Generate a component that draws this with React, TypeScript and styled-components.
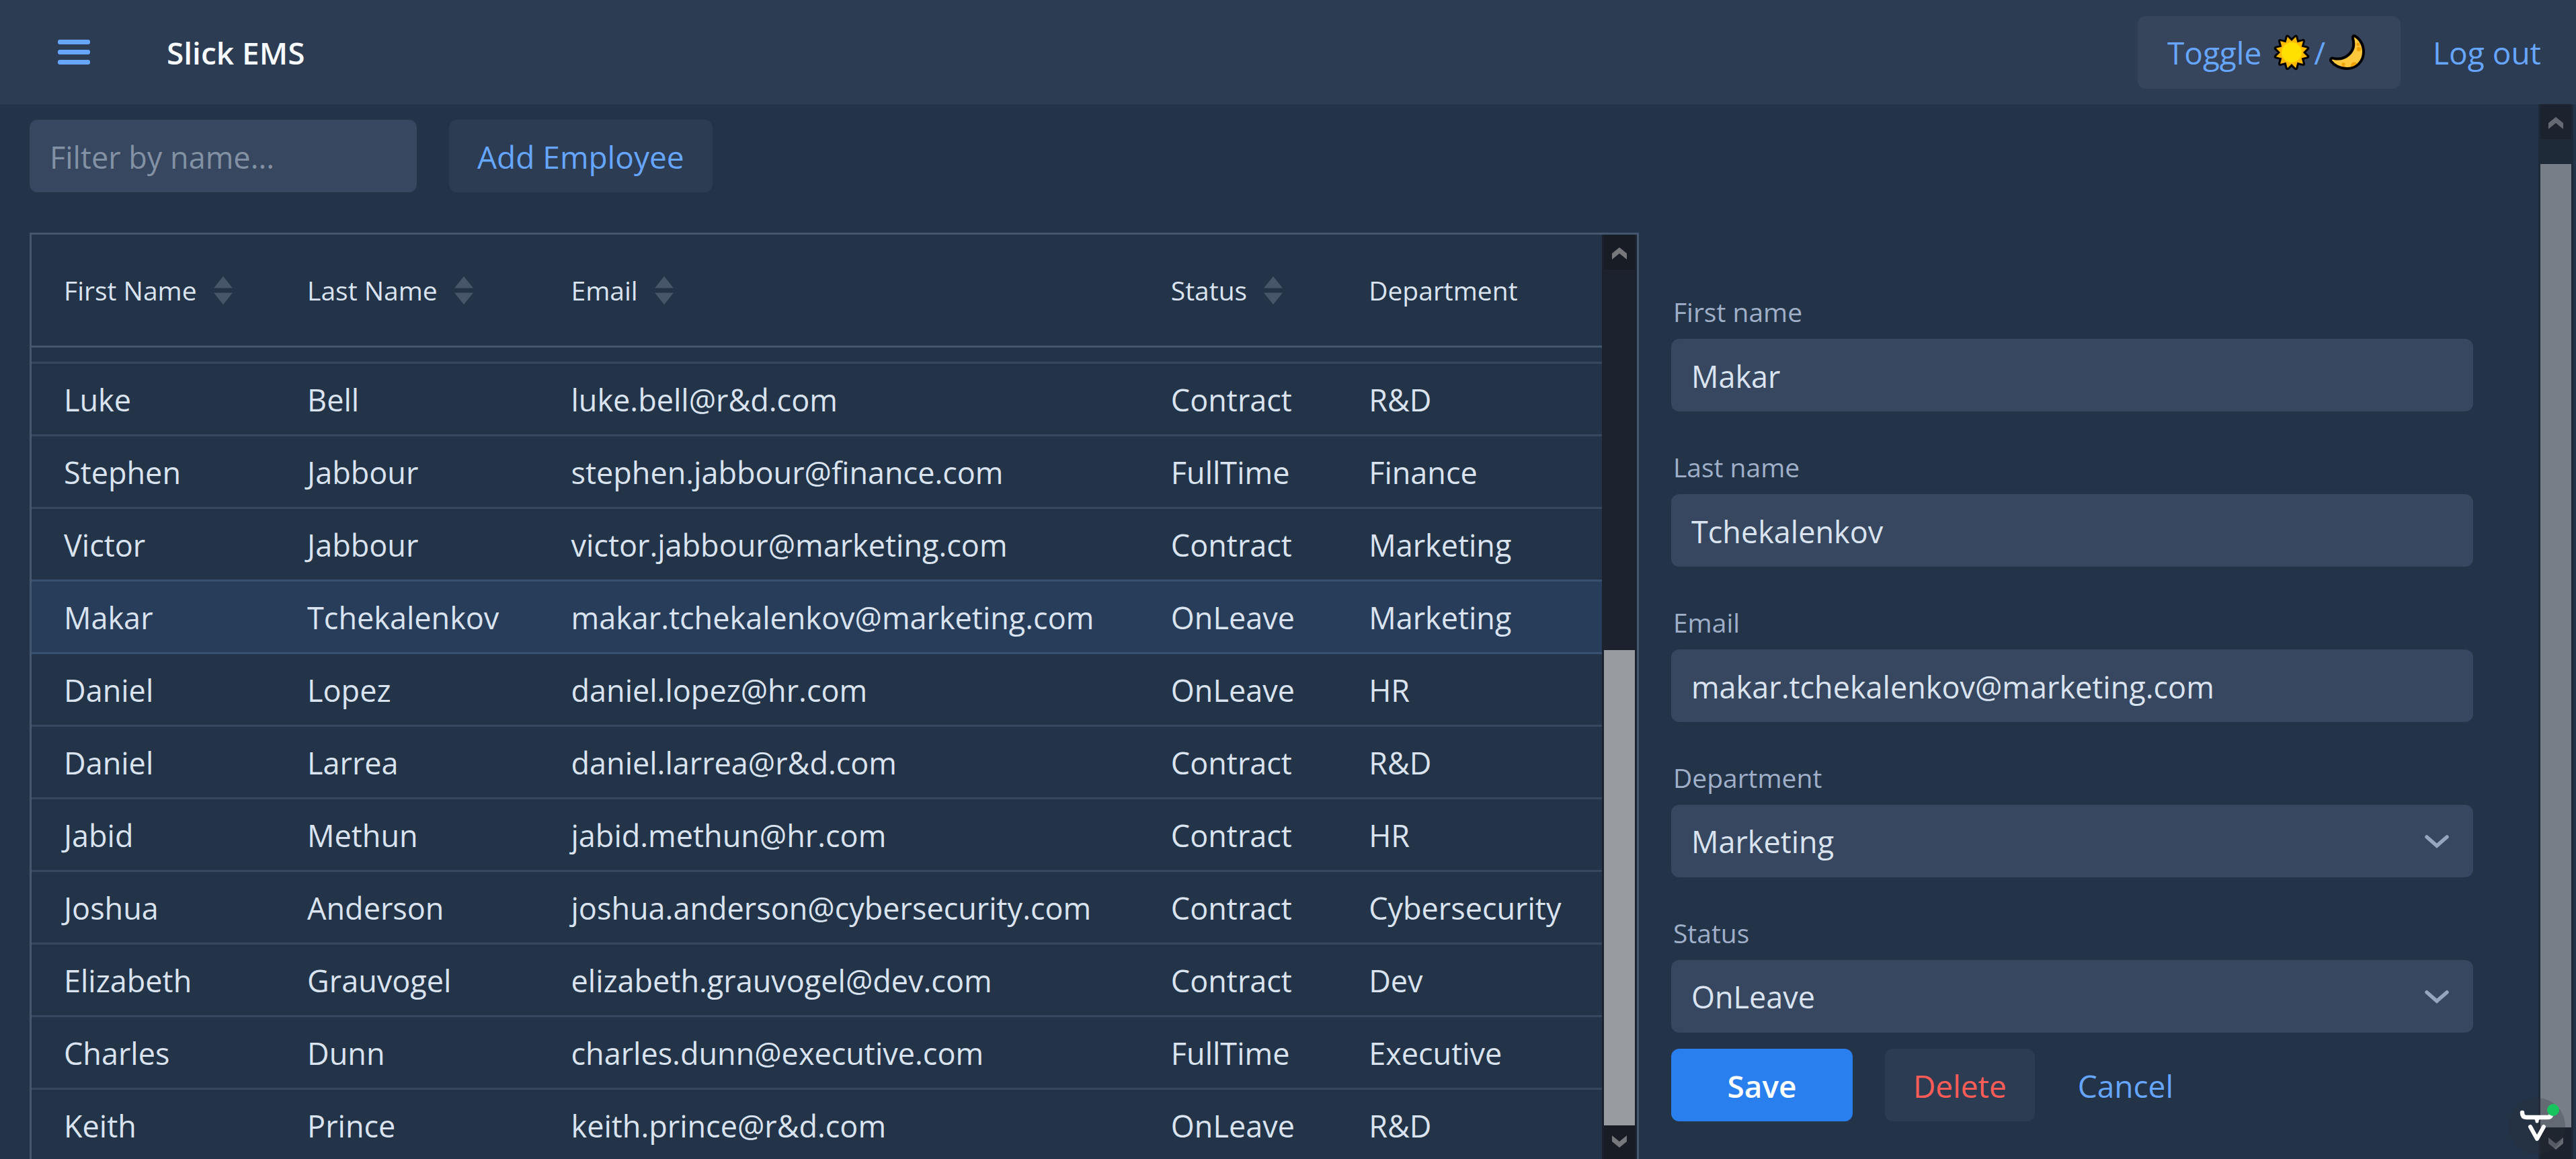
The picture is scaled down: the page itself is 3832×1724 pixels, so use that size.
import React, { useState } from "react";
import styled, { createGlobalStyle, css } from "styled-components";

const color = {
  base: "#233348",
  bar: "#2c3c52",
  barButton: "#36455b",
  field: "#36475f",
  line: "#36475f",
  outline: "#45566f",
  selected: "#283d5a",
  selectedLine: "#39506f",
  header: "#f7fafe",
  body: "#dae3f0",
  label: "#a0afc8",
  hint: "#8391a4",
  link: "#66a6ff",
  primary: "#2a7fef",
  error: "#ff5c57",
};

const size = {
  small: "39px",
  text: "45px",
  action: "46px",
};

const GlobalStyle = createGlobalStyle`
  *, *::before, *::after { box-sizing: border-box; }
  body {
    margin: 0;
    background: ${color.base};
    color: ${color.body};
    font-family: "Segoe UI", "Open Sans", "Noto Sans", sans-serif;
    font-size: ${size.text};
    line-height: 72px;
    overflow: hidden;
  }
  button, input, select { font: inherit; color: inherit; margin: 0; }
`;

const Page = styled.div`
  display: flex;
  flex-direction: column;
  height: 100vh;
`;

const TopBar = styled.header`
  display: flex;
  align-items: center;
  height: 155px;
  padding: 0 52px 0 86px;
  background: ${color.bar};
`;

const MenuButton = styled.button`
  display: flex;
  padding: 0;
  border: 0;
  background: none;
  color: ${color.link};
`;

const Title = styled.h1`
  flex: 1;
  margin: 0 0 0 114px;
  color: ${color.header};
  font-size: ${size.action};
  font-weight: 600;
`;

type Tone = "bar" | "plain" | "danger" | "link" | "primary";

const tones = {
  bar: css`padding: 0 46px 0 44px; background: ${color.barButton}; color: ${color.link};`,
  plain: css`background: ${color.bar}; color: ${color.link};`,
  danger: css`background: ${color.bar}; color: ${color.error};`,
  link: css`background: none; color: ${color.link};`,
  primary: css`
    min-width: 270px;
    background: ${color.primary};
    color: #fff;
    font-weight: 600;
  `,
};

const Button = styled.button<{ $tone: Tone }>`
  display: inline-flex;
  align-items: center;
  justify-content: center;
  height: 108px;
  padding: 2px 42px 0;
  border: 0;
  border-radius: 12px;
  font-size: ${size.action};
  white-space: pre;
  ${(p) => tones[p.$tone]}
`;

const LogOut = styled.a`
  margin-left: 48px;
  color: ${color.link};
  font-size: ${size.action};
  text-decoration: none;
`;

const Body = styled.div`
  display: flex;
  flex: 1;
  min-height: 0;
  padding-right: 4px;
`;

const View = styled.main`
  display: flex;
  flex: 1;
  flex-direction: column;
  min-width: 0;
  padding: 23px 49px 0 44px;
`;

const Toolbar = styled.div`
  display: flex;
  gap: 48px;
  margin-bottom: 60px;
`;

const fieldStyle = css`
  width: 100%;
  height: 108px;
  padding: 2px 30px 0;
  border: 0;
  border-radius: 12px;
  outline: 0;
  background: ${color.field};
`;

const TextInput = styled.input`
  ${fieldStyle}
  &::placeholder { color: ${color.hint}; opacity: 1; }
`;

const FilterInput = styled(TextInput)`
  width: 576px;
`;

const Select = styled.select`
  ${fieldStyle}
  appearance: none;
`;

const SelectBox = styled.div`
  position: relative;
  display: flex;
  color: #96a6bf;
  select { color: ${color.body}; }
  svg {
    position: absolute;
    top: 44px;
    right: 36px;
    pointer-events: none;
  }
`;

const Content = styled.div`
  display: flex;
  flex: 1;
  min-height: 0;
`;

const Grid = styled.section`
  display: flex;
  width: 65%;
  overflow: hidden;
  border: 3px solid ${color.outline};
  border-bottom: 0;
`;

const TableArea = styled.div`
  flex: 1;
  min-width: 0;
`;

const Table = styled.table`
  width: 100%;
  table-layout: fixed;
  border-collapse: separate;
  border-spacing: 0;
`;

const HeadCell = styled.th`
  height: 168px;
  padding: 0 0 0 48px;
  border-bottom: 3px solid ${color.outline};
  font-size: ${size.small};
  font-weight: 400;
  text-align: left;
`;

const HeadLabel = styled.span`
  display: flex;
  align-items: center;
  gap: 25px;
`;

const Row = styled.tr<{ $selected?: boolean }>`
  background: ${(p) => (p.$selected ? color.selected : "none")};
`;

const Cell = styled.td<{ $strong?: boolean; $cut?: boolean }>`
  height: ${(p) => (p.$cut ? "24px" : "108px")};
  padding: 2px 0 0 48px;
  border-bottom: 3px solid ${(p) => (p.$strong ? color.selectedLine : color.line)};
  white-space: nowrap;
`;

const Bar = styled.div<{ $outer?: boolean }>`
  display: flex;
  flex-direction: column;
  flex: 0 0 52px;
  padding: 0 3px;
  background: ${(p) => (p.$outer ? "#1f2a39" : "#1c222d")};
  color: ${(p) => (p.$outer ? "#656972" : "#77787b")};
`;

const Arrow = styled.button<{ $outer?: boolean; $down?: boolean }>`
  display: flex;
  justify-content: center;
  flex: 0 0 ${(p) => (p.$down ? (p.$outer ? "47px" : "50px") : "52px")};
  padding: ${(p) => (p.$down ? "15px" : "19px")} 0 0;
  border: 0;
  background: ${(p) => (p.$outer ? "#1c232e" : "#181c24")};
  color: inherit;
`;

const Track = styled.div<{ $grow: number }>`
  flex: ${(p) => p.$grow} 1 0;
`;

const Thumb = styled(Track)<{ $outer?: boolean }>`
  background: ${(p) => (p.$outer ? "#777e88" : "#989b9f")};
`;

const Form = styled.form`
  display: flex;
  flex: 1;
  flex-direction: column;
  gap: 24px;
  min-width: 0;
  padding: 82px 48px 0;
`;

const Fields = styled.div`
  display: flex;
  flex-direction: column;
  gap: 47px;
`;

const Field = styled.div`
  display: flex;
  flex-direction: column;
`;

const Label = styled.label`
  height: 76px;
  padding-left: 3px;
  color: ${color.label};
  font-size: ${size.small};
`;

const Actions = styled.div`
  display: flex;
  gap: 48px;
`;

const CancelButton = styled(Button)`
  margin-left: -26px;
`;

const DevBadge = styled.div`
  position: fixed;
  right: 16px;
  bottom: 7px;
  width: 84px;
  height: 84px;
`;

const sunRays = Array.from({ length: 24 }, (_, i) => {
  const angle = (Math.PI / 12) * (i + 1) - Math.PI / 2;
  const radius = i % 2 === 0 ? 24 : 17;
  return `${33 + radius * Math.cos(angle)},${28 + radius * Math.sin(angle)}`;
}).join(" ");

const Sun = () => (
  <svg width="66" height="56" viewBox="0 0 66 56">
    <polygon points={sunRays} fill="#ffb900" stroke="#000" strokeWidth="6" strokeLinejoin="round" />
    <polygon points={sunRays} fill="#ffb900" />
    <circle cx="33" cy="28" r="15" fill="#ffe000" />
  </svg>
);

const Moon = () => (
  <svg width="66" height="56" viewBox="-5 0 66 56">
    <path
      d="M39 3.500C47 8 52 17 52 27C52 42 41 52 27 52C17 52 8 47 3.500 41C2 38 4 35.500 8 37C24 40 42 28 36 7C35.500 4 37 2.500 39 3.500Z"
      fill="#ffc83d"
      stroke="#000"
      strokeWidth="4"
      strokeLinejoin="round"
    />
    <circle cx="44" cy="16" r="2.500" fill="#f0a30a" />
    <circle cx="45" cy="23" r="3.300" fill="#f0a30a" />
    <circle cx="22" cy="46" r="2.700" fill="#f0a30a" />
    <path d="M33 49.500C32 43 39 40 42.500 44.500Q38 48.500 33 49.500Z" fill="#f0a30a" />
  </svg>
);

const MenuIcon = () => (
  <svg width="48" height="38" viewBox="0 0 48 38" fill="currentColor">
    <rect y="0" width="48" height="7" rx="3" />
    <rect y="15" width="48" height="7" rx="3" />
    <rect y="30" width="48" height="7" rx="3" />
  </svg>
);

const SortIcon = () => (
  <svg width="28" height="42" viewBox="0 0 28 42" fill="#475669">
    <path d="M14 0L28 17.500H0Z" />
    <path d="M14 42L28 24.500H0Z" />
  </svg>
);

const Chevron = () => (
  <svg width="36" height="22" viewBox="0 0 36 22" fill="none" stroke="currentColor" strokeWidth="5.500" strokeLinecap="round">
    <path d="M3 4L18 17L33 4" />
  </svg>
);

const ArrowIcon = ({ down }: { down?: boolean }) => (
  <svg width="22" height="18" viewBox="0 0 22 18" fill="currentColor">
    <path d={down ? "M11 18L0 9V0L11 9L22 0V9Z" : "M11 0L22 9V18L11 9L0 18V9Z"} />
  </svg>
);

const ScrollBar = ({ outer, before, size }: { outer?: boolean; before: number; size: number }) => (
  <Bar $outer={outer}>
    <Arrow type="button" aria-label="Scroll up" $outer={outer}>
      <ArrowIcon />
    </Arrow>
    <Track $grow={before} />
    <Thumb $grow={size} $outer={outer} />
    <Arrow type="button" aria-label="Scroll down" $outer={outer} $down>
      <ArrowIcon down />
    </Arrow>
  </Bar>
);

const columns = [
  { name: "First Name", width: "15.5%", sortable: true },
  { name: "Last Name", width: "16.8%", sortable: true },
  { name: "Email", width: "38.2%", sortable: true },
  { name: "Status", width: "12.6%", sortable: true },
  { name: "Department", width: "16.9%", sortable: false },
];

const employees = [
  ["Luke", "Bell", "luke.bell@r&d.com", "Contract", "R&D"],
  ["Stephen", "Jabbour", "stephen.jabbour@finance.com", "FullTime", "Finance"],
  ["Victor", "Jabbour", "victor.jabbour@marketing.com", "Contract", "Marketing"],
  ["Makar", "Tchekalenkov", "makar.tchekalenkov@marketing.com", "OnLeave", "Marketing"],
  ["Daniel", "Lopez", "daniel.lopez@hr.com", "OnLeave", "HR"],
  ["Daniel", "Larrea", "daniel.larrea@r&d.com", "Contract", "R&D"],
  ["Jabid", "Methun", "jabid.methun@hr.com", "Contract", "HR"],
  ["Joshua", "Anderson", "joshua.anderson@cybersecurity.com", "Contract", "Cybersecurity"],
  ["Elizabeth", "Grauvogel", "elizabeth.grauvogel@dev.com", "Contract", "Dev"],
  ["Charles", "Dunn", "charles.dunn@executive.com", "FullTime", "Executive"],
  ["Keith", "Prince", "keith.prince@r&d.com", "OnLeave", "R&D"],
];

const departments = ["Marketing", "Finance", "R&D", "HR", "Cybersecurity", "Dev", "Executive"];
const statuses = ["OnLeave", "Contract", "FullTime"];

export default function App() {
  const [selected, setSelected] = useState(3);
  const [first, last, email, status, department] = employees[selected];

  return (
    <>
      <GlobalStyle />
      <Page>
        <TopBar>
          <MenuButton type="button" aria-label="Menu">
            <MenuIcon />
          </MenuButton>
          <Title>Slick EMS</Title>
          <Button type="button" $tone="bar">
            {"Toggle "}
            <Sun />/<Moon />
          </Button>
          <LogOut href="#logout">Log out</LogOut>
        </TopBar>
        <Body>
          <View>
            <Toolbar>
              <FilterInput type="text" placeholder="Filter by name..." aria-label="Filter by name" />
              <Button type="button" $tone="plain">Add Employee</Button>
            </Toolbar>
            <Content>
              <Grid>
                <TableArea>
                  <Table>
                    <colgroup>
                      {columns.map((c) => (
                        <col key={c.name} style={{ width: c.width }} />
                      ))}
                    </colgroup>
                    <thead>
                      <tr>
                        {columns.map((c) => (
                          <HeadCell key={c.name} scope="col">
                            <HeadLabel>
                              {c.name}
                              {c.sortable && <SortIcon />}
                            </HeadLabel>
                          </HeadCell>
                        ))}
                      </tr>
                    </thead>
                    <tbody>
                      <Row aria-hidden="true">
                        <Cell colSpan={5} $cut />
                      </Row>
                      {employees.map((cells, i) => (
                        <Row
                          key={cells[2]}
                          $selected={i === selected}
                          aria-selected={i === selected}
                          onClick={() => setSelected(i)}
                        >
                          {cells.map((text, c) => (
                            <Cell key={c} $strong={i === selected || i + 1 === selected}>
                              {text}
                            </Cell>
                          ))}
                        </Row>
                      ))}
                    </tbody>
                  </Table>
                </TableArea>
                <ScrollBar before={566} size={707} />
              </Grid>
              <Form key={selected} onSubmit={(e) => e.preventDefault()}>
                <Fields>
                  <Field>
                    <Label htmlFor="first">First name</Label>
                    <TextInput id="first" defaultValue={first} />
                  </Field>
                  <Field>
                    <Label htmlFor="last">Last name</Label>
                    <TextInput id="last" defaultValue={last} />
                  </Field>
                  <Field>
                    <Label htmlFor="email">Email</Label>
                    <TextInput id="email" defaultValue={email} />
                  </Field>
                  <Field>
                    <Label htmlFor="department">Department</Label>
                    <SelectBox>
                      <Select id="department" defaultValue={department}>
                        {departments.map((d) => (
                          <option key={d}>{d}</option>
                        ))}
                      </Select>
                      <Chevron />
                    </SelectBox>
                  </Field>
                  <Field>
                    <Label htmlFor="status">Status</Label>
                    <SelectBox>
                      <Select id="status" defaultValue={status}>
                        {statuses.map((s) => (
                          <option key={s}>{s}</option>
                        ))}
                      </Select>
                      <Chevron />
                    </SelectBox>
                  </Field>
                </Fields>
                <Actions>
                  <Button type="submit" $tone="primary">Save</Button>
                  <Button type="button" $tone="danger">Delete</Button>
                  <CancelButton type="button" $tone="link">Cancel</CancelButton>
                </Actions>
              </Form>
            </Content>
          </View>
          <ScrollBar outer before={37} size={1433} />
        </Body>
      </Page>
      <DevBadge>
        <svg width="84" height="84" viewBox="0 0 84 84" fill="none" stroke="#fff" strokeLinecap="round" strokeLinejoin="round">
          <circle cx="42" cy="42" r="42" fill="#2b2f33" fillOpacity="0.25" stroke="none" />
          <path d="M20 22Q20 29 26 29H58Q63 29 63 24" strokeWidth="6.500" />
          <path d="M36 29Q42 29 42 35Q42 29 48 29" strokeWidth="5" />
          <path d="M32 43L42 61L52 43" strokeWidth="6" />
          <circle cx="66" cy="18" r="9" fill="#18c45d" stroke="none" />
        </svg>
      </DevBadge>
    </>
  );
}
